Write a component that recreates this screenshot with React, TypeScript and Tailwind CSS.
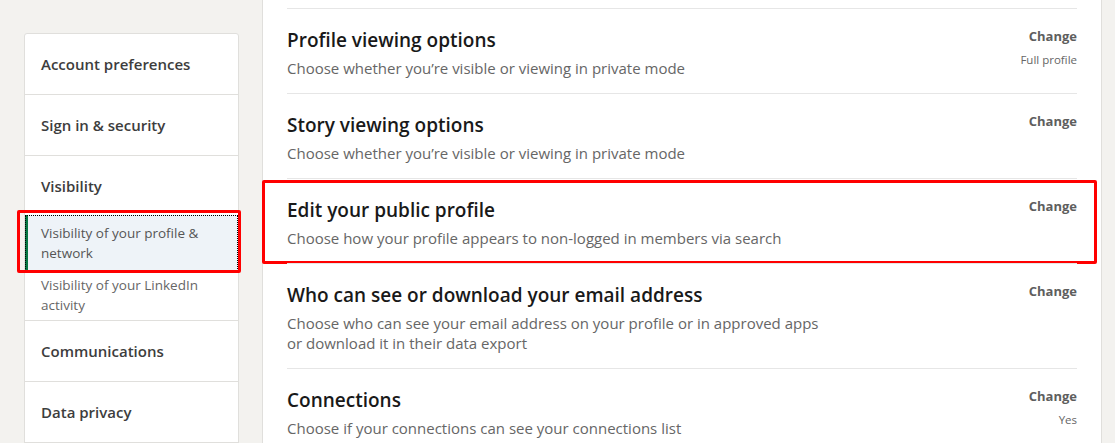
import React from 'react';

type Setting = {
    title: string;
    description: string[];
    value?: string;
    highlighted?: boolean;
};

const settings: Setting[] = [
    {
        title: 'Profile viewing options',
        description: ["Choose whether you\u2019re visible or viewing in private mode"],
        value: 'Full profile',
    },
    {
        title: 'Story viewing options',
        description: ["Choose whether you\u2019re visible or viewing in private mode"],
    },
    {
        title: 'Edit your public profile',
        description: ['Choose how your profile appears to non-logged in members via search'],
        highlighted: true,
    },
    {
        title: 'Who can see or download your email address',
        description: [
            'Choose who can see your email address on your profile or in approved apps',
            'or download it in their data export',
        ],
    },
    {
        title: 'Connections',
        description: ['Choose if your connections can see your connections list'],
        value: 'Yes',
    },
];

const Sidebar: React.FC = () => (
    <aside className="mt-[33px] w-[215px] shrink-0 self-start rounded-t-[3px] border border-[#e0dfdc] bg-white text-[15px] font-semibold text-[#3d3d3d]">
        <div className="flex h-[61px] items-center border-b border-[#e0dfdc] px-4">Account preferences</div>
        <div className="flex h-[61px] items-center border-b border-[#e0dfdc] px-4">Sign in &amp; security</div>
        <div className="border-b border-[#e0dfdc] pb-[5px]">
            <div className="px-4 pt-[20px] leading-[21px]">Visibility</div>
            <ul className="mt-[18px] text-[13.5px] font-normal leading-5 text-[#666]">
                <li className="relative">
                    <div className="border-l-[3px] border-[#057642] bg-[#eef3f8] py-2 pl-[13px] pr-4 text-[#555] outline outline-1 outline-dotted outline-black -outline-offset-1">
                        Visibility of your profile &amp; network
                    </div>
                    <div className="pointer-events-none absolute -left-[8px] -right-[3px] -top-[5px] -bottom-[2px] rounded-[2px] border-[3px] border-[#ff0000]" />
                </li>
                <li className="px-4 pt-1">Visibility of your LinkedIn activity</li>
            </ul>
        </div>
        <div className="flex h-[61px] items-center border-b border-[#e0dfdc] px-4">Communications</div>
        <div className="flex h-[61px] items-center border-b border-[#e0dfdc] px-4">Data privacy</div>
    </aside>
);

const SettingRow: React.FC<{ setting: Setting }> = ({ setting }) => (
    <li className="relative flex justify-between border-t border-[#e6e6e6] pb-[15px] pt-[17px]">
        <div>
            <h3 className="text-[19px] font-semibold leading-7 text-[#191919]">{setting.title}</h3>
            <p className="mt-1 text-[15px] leading-5 text-[#666]">
                {setting.description.map((line) => (
                    <span key={line} className="block">
                        {line}
                    </span>
                ))}
            </p>
        </div>
        <div className="flex flex-col items-end">
            <button className="text-[13px] font-bold leading-5 text-[#5e5e5e]">Change</button>
            {setting.value && <span className="mt-[6px] text-[11.5px] leading-4 text-[#666]">{setting.value}</span>}
        </div>
        {setting.highlighted && (
            <div className="pointer-events-none absolute -left-[25px] -right-[20px] top-[1px] bottom-[-1px] rounded-[2px] border-[3px] border-[#ff0000]" />
        )}
    </li>
);

export default function App() {
    return (
        <div
            className="flex h-[443px] gap-[23px] overflow-hidden bg-[#f3f2ef] pl-6"
            style={{ fontFamily: '"Open Sans", "Noto Sans", sans-serif' }}
        >
            <Sidebar />
            <main className="w-[840px] shrink-0 border-x border-[#e0dfdc] bg-white px-6 pt-2">
                <ul>
                    {settings.map((s) => (
                        <SettingRow key={s.title} setting={s} />
                    ))}
                </ul>
            </main>
        </div>
    );
}
